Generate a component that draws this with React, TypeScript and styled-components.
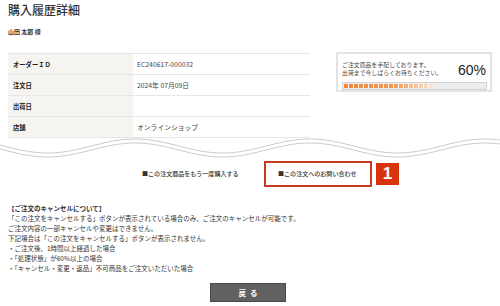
import React from "react";
import styled, { createGlobalStyle } from "styled-components";

const GlobalStyle = createGlobalStyle`
  html, body { margin: 0; padding: 0; background: #fff; }
  body {
    font-family: "Noto Sans CJK JP", "Noto Sans", sans-serif;
    color: #333;
    width: 500px;
    overflow: hidden;
  }
  * { box-sizing: border-box; }
`;

const Page = styled.div`
  padding: 0 8px;
  display: flex;
  flex-direction: column;
`;

const Title = styled.h1`
  margin: 3px 0 0;
  font-size: 12px;
  line-height: 14px;
  font-weight: 500;
  color: #333;
`;

const Customer = styled.div`
  margin-top: 11px;
  font-size: 6px;
  line-height: 8px;
  font-weight: 700;
  color: #333;
`;

const Summary = styled.div`
  margin-top: 16px;
  display: flex;
  align-items: flex-start;
  justify-content: space-between;
`;

const Table = styled.div`
  margin-top: 1px;
  width: 302px;
  border-top: 1px solid #e8e6e2;
  display: flex;
  flex-direction: column;
`;

const Row = styled.div`
  display: grid;
  grid-template-columns: 125px 1fr;
  height: 21px;
  border-bottom: 1px solid #e6e6e6;
`;

const Label = styled.div`
  background: #f6f4f0;
  padding-left: 5px;
  display: flex;
  align-items: center;
  font-size: 6.3px;
  font-weight: 700;
  color: #222;
`;

const Value = styled.div`
  padding-left: 4px;
  display: flex;
  align-items: center;
  font-size: 6.8px;
  color: #444;
`;

const StatusBox = styled.div`
  width: 156px;
  height: 40px;
  border: 2px solid #e3e3e3;
  padding: 3px 3px 0 4px;
  display: flex;
  flex-direction: column;
`;

const StatusTop = styled.div`
  display: flex;
  align-items: center;
  justify-content: space-between;
  height: 24px;
`;

const StatusText = styled.div`
  font-size: 5.8px;
  line-height: 8px;
  color: #444;
  letter-spacing: 0.1px;
`;

const Percent = styled.div`
  font-family: "Liberation Sans", Arial, sans-serif;
  font-size: 14px;
  line-height: 16px;
  color: #222;
  padding-right: 1px;
  margin-top: 2px;
`;

const Bar = styled.div`
  margin-top: 1px;
  height: 8px;
  background: #ececec;
  border: 1px solid #d2d2d2;
  padding: 1px;
`;

const BarFill = styled.div`
  height: 100%;
  background:
    repeating-linear-gradient(90deg, transparent 0 4px, #fff 4px 5px),
    linear-gradient(90deg, #f0883a 0%, #f29650 55%, #f9c9a2 85%, #fde4d0 100%);
`;

const Wave = styled.svg`
  display: block;
  margin: 0 -8px;
  width: 500px;
  height: 22px;
`;

const Links = styled.div`
  margin-top: 1px;
  display: flex;
  align-items: center;
  padding-left: 134px;
`;

const LinkText = styled.span`
  font-size: 6.05px;
  line-height: 8px;
  font-weight: 500;
  color: #333;
  white-space: nowrap;
`;

const PlainLink = styled(LinkText)`
  width: 122px;
`;

const HighlightBox = styled.div`
  height: 26px;
  width: 108px;
  border: 2px solid #c63a22;
  padding-left: 12px;
  display: flex;
  align-items: center;
`;

const Badge = styled.div`
  margin-left: 4px;
  width: 23px;
  height: 22px;
  background: #d8320f;
  color: #fff;
  font-family: "Liberation Sans", Arial, sans-serif;
  font-weight: 700;
  font-size: 17px;
  display: flex;
  align-items: center;
  justify-content: center;
`;

const Notice = styled.div`
  margin-top: 16px;
  display: flex;
  flex-direction: column;
`;

const NoticeLine = styled.div<{ $bold?: boolean }>`
  font-size: 6.5px;
  line-height: 10px;
  height: 10px;
  white-space: nowrap;
  color: #333;
  font-weight: ${(p) => (p.$bold ? 700 : 400)};
`;

const Footer = styled.div`
  margin-top: 10px;
  display: flex;
  justify-content: center;
  padding-right: 4px;
`;

const BackButton = styled.button`
  width: 76px;
  height: 19px;
  background: #616161;
  border: 1px solid #4a4a4a;
  color: #fff;
  font-family: "Noto Sans CJK JP", sans-serif;
  font-size: 7.5px;
  font-weight: 700;
  letter-spacing: 4px;
  padding: 0 0 0 4px;
  display: flex;
  align-items: center;
  justify-content: center;
`;

const rows = [
  { label: "オーダーＩＤ", value: "EC240617-000032" },
  { label: "注文日", value: "2024年 07月09日" },
  { label: "出荷日", value: "" },
  { label: "店舗", value: "オンラインショップ" },
];

const notes = [
  "「この注文をキャンセルする」ボタンが表示されている場合のみ、ご注文のキャンセルが可能です。",
  "ご注文内容の一部キャンセルや変更はできません。",
  "下記場合は「この注文をキャンセルする」ボタンが表示されません。",
  "・ご注文後、1時間以上経過した場合",
  "・「処理状態」が60%以上の場合",
  "・「キャンセル・変更・返品」不可商品をご注文いただいた場合",
];

function wavePath(offset: number): string {
  const P = 175;
  const crest = 135;
  const center = 8 + offset;
  const amp = 7;
  const pts: string[] = [];
  for (let x = 0; x <= 500; x += 2) {
    const y = center - amp * Math.cos((2 * Math.PI * (x - crest)) / P);
    pts.push(`${x === 0 ? "M" : "L"}${x} ${y.toFixed(2)}`);
  }
  return pts.join(" ");
}

export default function App() {
  const percent = 60;
  return (
    <>
      <GlobalStyle />
      <Page>
        <Title>購入履歴詳細</Title>
        <Customer>山田 太郎 様</Customer>
        <Summary>
          <Table>
            {rows.map((r) => (
              <Row key={r.label}>
                <Label>{r.label}</Label>
                <Value>{r.value}</Value>
              </Row>
            ))}
          </Table>
          <StatusBox>
            <StatusTop>
              <StatusText>
                ご注文商品を手配しております。
                <br />
                出荷まで今しばらくお待ちください。
              </StatusText>
              <Percent>{percent}%</Percent>
            </StatusTop>
            <Bar>
              <BarFill style={{ width: `${percent + 3}%` }} />
            </Bar>
          </StatusBox>
        </Summary>
        <Wave viewBox="0 0 500 22">
          <path d={wavePath(0)} fill="none" stroke="#cccccc" strokeWidth="1" />
          <path d={wavePath(4)} fill="none" stroke="#cccccc" strokeWidth="1" />
        </Wave>
        <Links>
          <PlainLink>■この注文商品をもう一度購入する</PlainLink>
          <HighlightBox>
            <LinkText>■この注文へのお問い合わせ</LinkText>
          </HighlightBox>
          <Badge>1</Badge>
        </Links>
        <Notice>
          <NoticeLine $bold>【ご注文のキャンセルについて】</NoticeLine>
          {notes.map((n) => (
            <NoticeLine key={n}>{n}</NoticeLine>
          ))}
        </Notice>
        <Footer>
          <BackButton>戻る</BackButton>
        </Footer>
      </Page>
    </>
  );
}
